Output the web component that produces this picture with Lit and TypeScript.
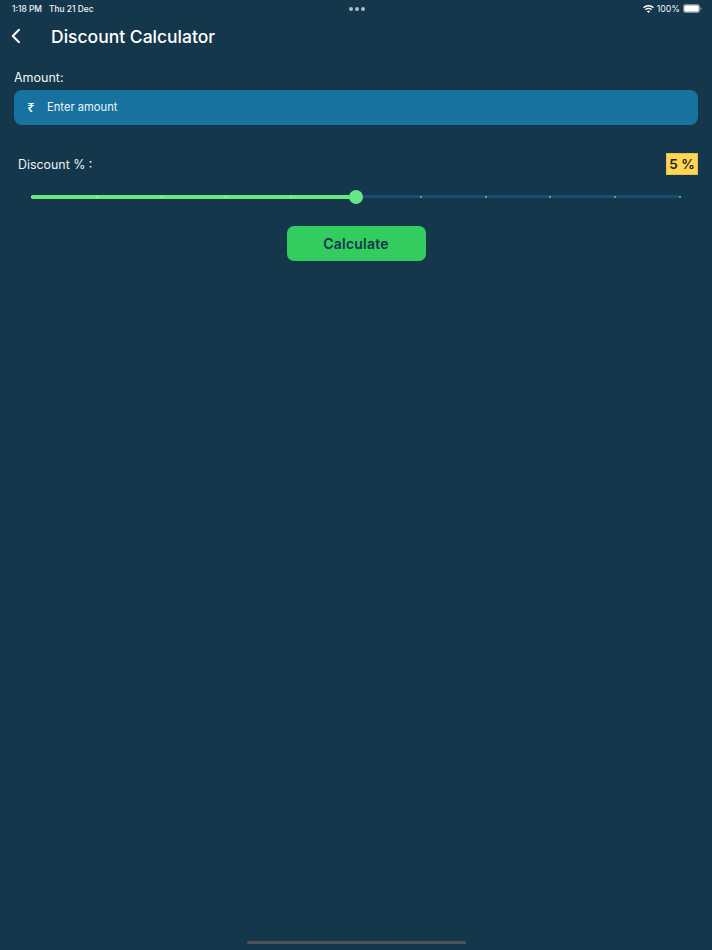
import { LitElement, html, css } from "lit";
import { customElement } from "lit/decorators.js";

const TICKS = [0, 1, 2, 3, 4, 5, 6, 7, 8, 9, 10];

@customElement("app-root")
export class AppRoot extends LitElement {
  static styles = css`
    :host {
      display: flex;
      flex-direction: column;
      width: 712px;
      height: 950px;
      overflow: hidden;
      background: #15374b;
      color: #fff;
      font-family: Inter, "Liberation Sans", sans-serif;
    }
    .status {
      display: flex;
      align-items: center;
      height: 17px;
      padding: 0 10px 0 12px;
      font-size: 8.4px;
      font-weight: 500;
      color: #f2f5f7;
    }
    .status-left { flex: 1; display: flex; gap: 7px; }
    .dots { display: flex; gap: 2px; }
    .dots i { width: 4px; height: 4px; border-radius: 50%; background: #a9bcc7; }
    .status-right { flex: 1; display: flex; justify-content: flex-end; align-items: center; gap: 3px; }
    .status-right span { font-size: 8.8px; font-weight: 400; }
    .header {
      display: flex;
      align-items: center;
      height: 38px;
      padding-left: 11px;
    }
    .back { width: 40px; height: 20px; display: block; }
    h1 { margin: 0; font-size: 17.5px; font-weight: 500; }
    .body { display: flex; flex-direction: column; padding: 0 14px; }
    .label { font-size: 12.5px; line-height: 16px; margin-top: 15px; color: #f4f6f7; }
    .input {
      display: flex;
      align-items: center;
      height: 35px;
      margin-top: 4px;
      padding-bottom: 1px;
      box-sizing: border-box;
      border-radius: 8px;
      background: #18729f;
      font-size: 11.2px;
      color: #eef5f9;
    }
    .rupee { width: 33px; text-align: center; padding-left: 1px; box-sizing: border-box; font-size: 13px; font-family: "Noto Sans", sans-serif; font-weight: 600; }
    .discount {
      display: flex;
      align-items: center;
      justify-content: space-between;
      margin-top: 28px;
      padding-left: 4px;
    }
    .discount span { font-size: 12.4px; color: #eef2f4; }
    .badge {
      display: flex;
      align-items: center;
      justify-content: center;
      box-sizing: border-box;
      width: 32px;
      height: 22px;
      background: #ffd552;
      border: 1px solid #e6c350;
      color: #14212a;
      font-size: 13.5px;
      font-weight: 600;
    }
    .slider {
      position: relative;
      height: 3px;
      margin: 20px 17px 0;
      border-radius: 2px;
      background: #164f73;
      display: flex;
      justify-content: space-between;
      align-items: center;
    }
    .fill {
      position: absolute;
      left: 0;
      top: -0.5px;
      width: 50%;
      height: 4px;
      border-radius: 2px;
      background: #65e883;
    }
    .tick { position: relative; width: 2px; height: 2px; background: #3fb08f; }
    .tick.on { background: #8debaa; }
    .thumb {
      position: absolute;
      left: 50%;
      top: 50%;
      width: 14px;
      height: 14px;
      margin: -7px 0 0 -7px;
      border-radius: 50%;
      background: #65e883;
    }
    .calc {
      align-self: center;
      width: 139px;
      height: 35px;
      margin-top: 28px;
      border: 0;
      border-radius: 7px;
      background: #33cc5f;
      color: #15374b;
      font: 600 14px Inter, "Liberation Sans", sans-serif;
      letter-spacing: 0.2px;
      padding: 0;
    }
    .home {
      align-self: center;
      width: 219px;
      height: 3px;
      margin-top: auto;
      margin-bottom: 6px;
      border-radius: 2px;
      background: #4c555a;
    }
  `;

  render() {
    return html`
      <div class="status">
        <div class="status-left"><span>1:18 PM</span><span>Thu 21 Dec</span></div>
        <div class="dots"><i></i><i></i><i></i></div>
        <div class="status-right">
          <svg width="11" height="8" viewBox="0 0 11 8" fill="#fff">
            <path d="M5.5 8 3.9 6.3a2.3 2.3 0 0 1 3.2 0ZM2.9 5.3l-.9-1a5 5 0 0 1 7 0l-.9 1a3.8 3.8 0 0 0-5.2 0ZM1 3.3 0 2.3a7.8 7.8 0 0 1 11 0l-1 1a6.5 6.5 0 0 0-9 0Z"/>
          </svg>
          <span>100%</span>
          <svg width="19" height="9" viewBox="0 0 19 9">
            <rect x=".4" y=".4" width="16.2" height="8.2" rx="2.2" fill="none" stroke="#a9b6bd" stroke-width=".8"/>
            <rect x="1.2" y="1.2" width="14.6" height="6.6" rx="1.4" fill="#fff"/>
            <path d="M17.4 3.2c.8.2 1.1.7 1.1 1.3s-.3 1.1-1.1 1.3Z" fill="#a9b6bd"/>
          </svg>
        </div>
      </div>
      <div class="header">
        <svg class="back" viewBox="0 0 40 20" fill="none" stroke="#fff" stroke-width="2" stroke-linecap="round" stroke-linejoin="round">
          <path d="M8 3.8 1.8 10 8 16.2"/>
        </svg>
        <h1>Discount Calculator</h1>
      </div>
      <div class="body">
        <div class="label">Amount:</div>
        <div class="input"><span class="rupee">₹</span><span>Enter amount</span></div>
        <div class="discount"><span>Discount % :</span><div class="badge">5 %</div></div>
        <div class="slider">
          <div class="fill"></div>
          ${TICKS.map((t) => html`<div class="tick ${t < 5 ? "on" : ""}"></div>`)}
          <div class="thumb"></div>
        </div>
        <button class="calc">Calculate</button>
      </div>
      <div class="home"></div>
    `;
  }
}
